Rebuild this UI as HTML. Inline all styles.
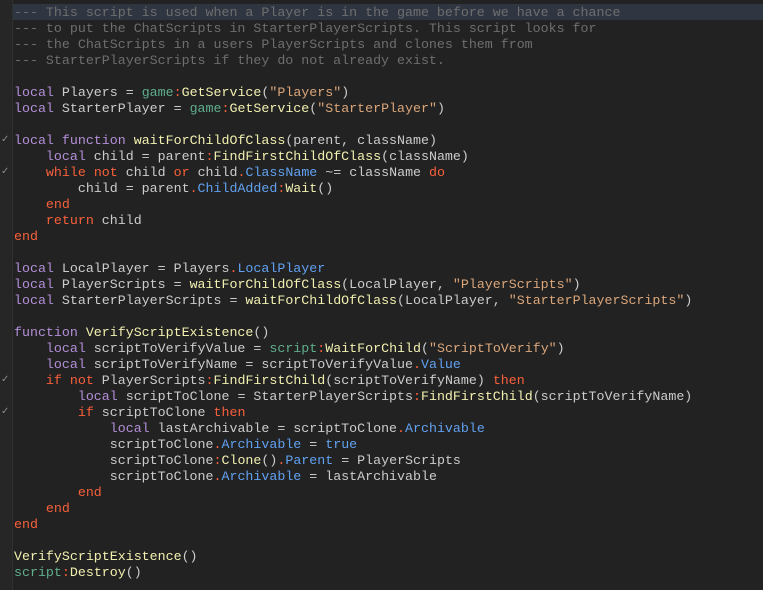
<!DOCTYPE html>
<html><head><style>
html,body{margin:0;padding:0;width:763px;height:590px;overflow:hidden;background:#222222;}
#g{position:absolute;left:0;top:0;width:12px;height:590px;background:#262626;border-right:1px solid #303030;}
.hl{position:absolute;left:13px;top:4px;width:750px;height:16px;background:#2f3541;}
pre{position:absolute;left:14px;top:4.5px;margin:0;font-family:"Liberation Mono","Cousine","DejaVu Sans Mono","Courier New",monospace;font-size:13.3px;line-height:16px;color:#cccccc;white-space:pre;}
pre span{font-family:inherit}
.c{color:#6e6e6e}.k{color:#b48fd8}.r{color:#f8603a}.s{color:#dba67a}.f{color:#f2f0b0}.b{color:#5fae8c}.p{color:#61a1f1}.o{color:#f8603a}
.ck{position:absolute;left:1px;font-size:10px;color:#888;font-family:"DejaVu Sans",sans-serif;}
</style></head><body>
<div id="g"></div>
<div class="hl"></div>
<span class="ck" style="top:134px">✓</span>
<span class="ck" style="top:166px">✓</span>
<span class="ck" style="top:374px">✓</span>
<span class="ck" style="top:406px">✓</span>
<pre><span class="c">--- This script is used when a Player is in the game before we have a chance
--- to put the ChatScripts in StarterPlayerScripts. This script looks for
--- the ChatScripts in a users PlayerScripts and clones them from
--- StarterPlayerScripts if they do not already exist.</span>

<span class="k">local</span> Players = <span class="b">game</span><span class="o">:</span><span class="f">GetService</span>(<span class="s">"Players"</span>)
<span class="k">local</span> StarterPlayer = <span class="b">game</span><span class="o">:</span><span class="f">GetService</span>(<span class="s">"StarterPlayer"</span>)

<span class="k">local</span> <span class="k">function</span> <span class="f">waitForChildOfClass</span>(parent, className)
    <span class="k">local</span> child = parent<span class="o">:</span><span class="f">FindFirstChildOfClass</span>(className)
    <span class="r">while</span> <span class="r">not</span> child <span class="r">or</span> child<span class="o">.</span><span class="p">ClassName</span> ~= className <span class="r">do</span>
        child = parent<span class="o">.</span><span class="p">ChildAdded</span><span class="o">:</span><span class="f">Wait</span>()
    <span class="r">end</span>
    <span class="r">return</span> child
<span class="r">end</span>

<span class="k">local</span> LocalPlayer = Players<span class="o">.</span><span class="p">LocalPlayer</span>
<span class="k">local</span> PlayerScripts = <span class="f">waitForChildOfClass</span>(LocalPlayer, <span class="s">"PlayerScripts"</span>)
<span class="k">local</span> StarterPlayerScripts = <span class="f">waitForChildOfClass</span>(LocalPlayer, <span class="s">"StarterPlayerScripts"</span>)

<span class="k">function</span> <span class="f">VerifyScriptExistence</span>()
    <span class="k">local</span> scriptToVerifyValue = <span class="b">script</span><span class="o">:</span><span class="f">WaitForChild</span>(<span class="s">"ScriptToVerify"</span>)
    <span class="k">local</span> scriptToVerifyName = scriptToVerifyValue<span class="o">.</span><span class="p">Value</span>
    <span class="r">if</span> <span class="r">not</span> PlayerScripts<span class="o">:</span><span class="f">FindFirstChild</span>(scriptToVerifyName) <span class="r">then</span>
        <span class="k">local</span> scriptToClone = StarterPlayerScripts<span class="o">:</span><span class="f">FindFirstChild</span>(scriptToVerifyName)
        <span class="r">if</span> scriptToClone <span class="r">then</span>
            <span class="k">local</span> lastArchivable = scriptToClone<span class="o">.</span><span class="p">Archivable</span>
            scriptToClone<span class="o">.</span><span class="p">Archivable</span> = <span class="p">true</span>
            scriptToClone<span class="o">:</span><span class="f">Clone</span>()<span class="o">.</span><span class="p">Parent</span> = PlayerScripts
            scriptToClone<span class="o">.</span><span class="p">Archivable</span> = lastArchivable
        <span class="r">end</span>
    <span class="r">end</span>
<span class="r">end</span>

<span class="f">VerifyScriptExistence</span>()
<span class="b">script</span><span class="o">:</span><span class="f">Destroy</span>()</pre>
</body></html>
